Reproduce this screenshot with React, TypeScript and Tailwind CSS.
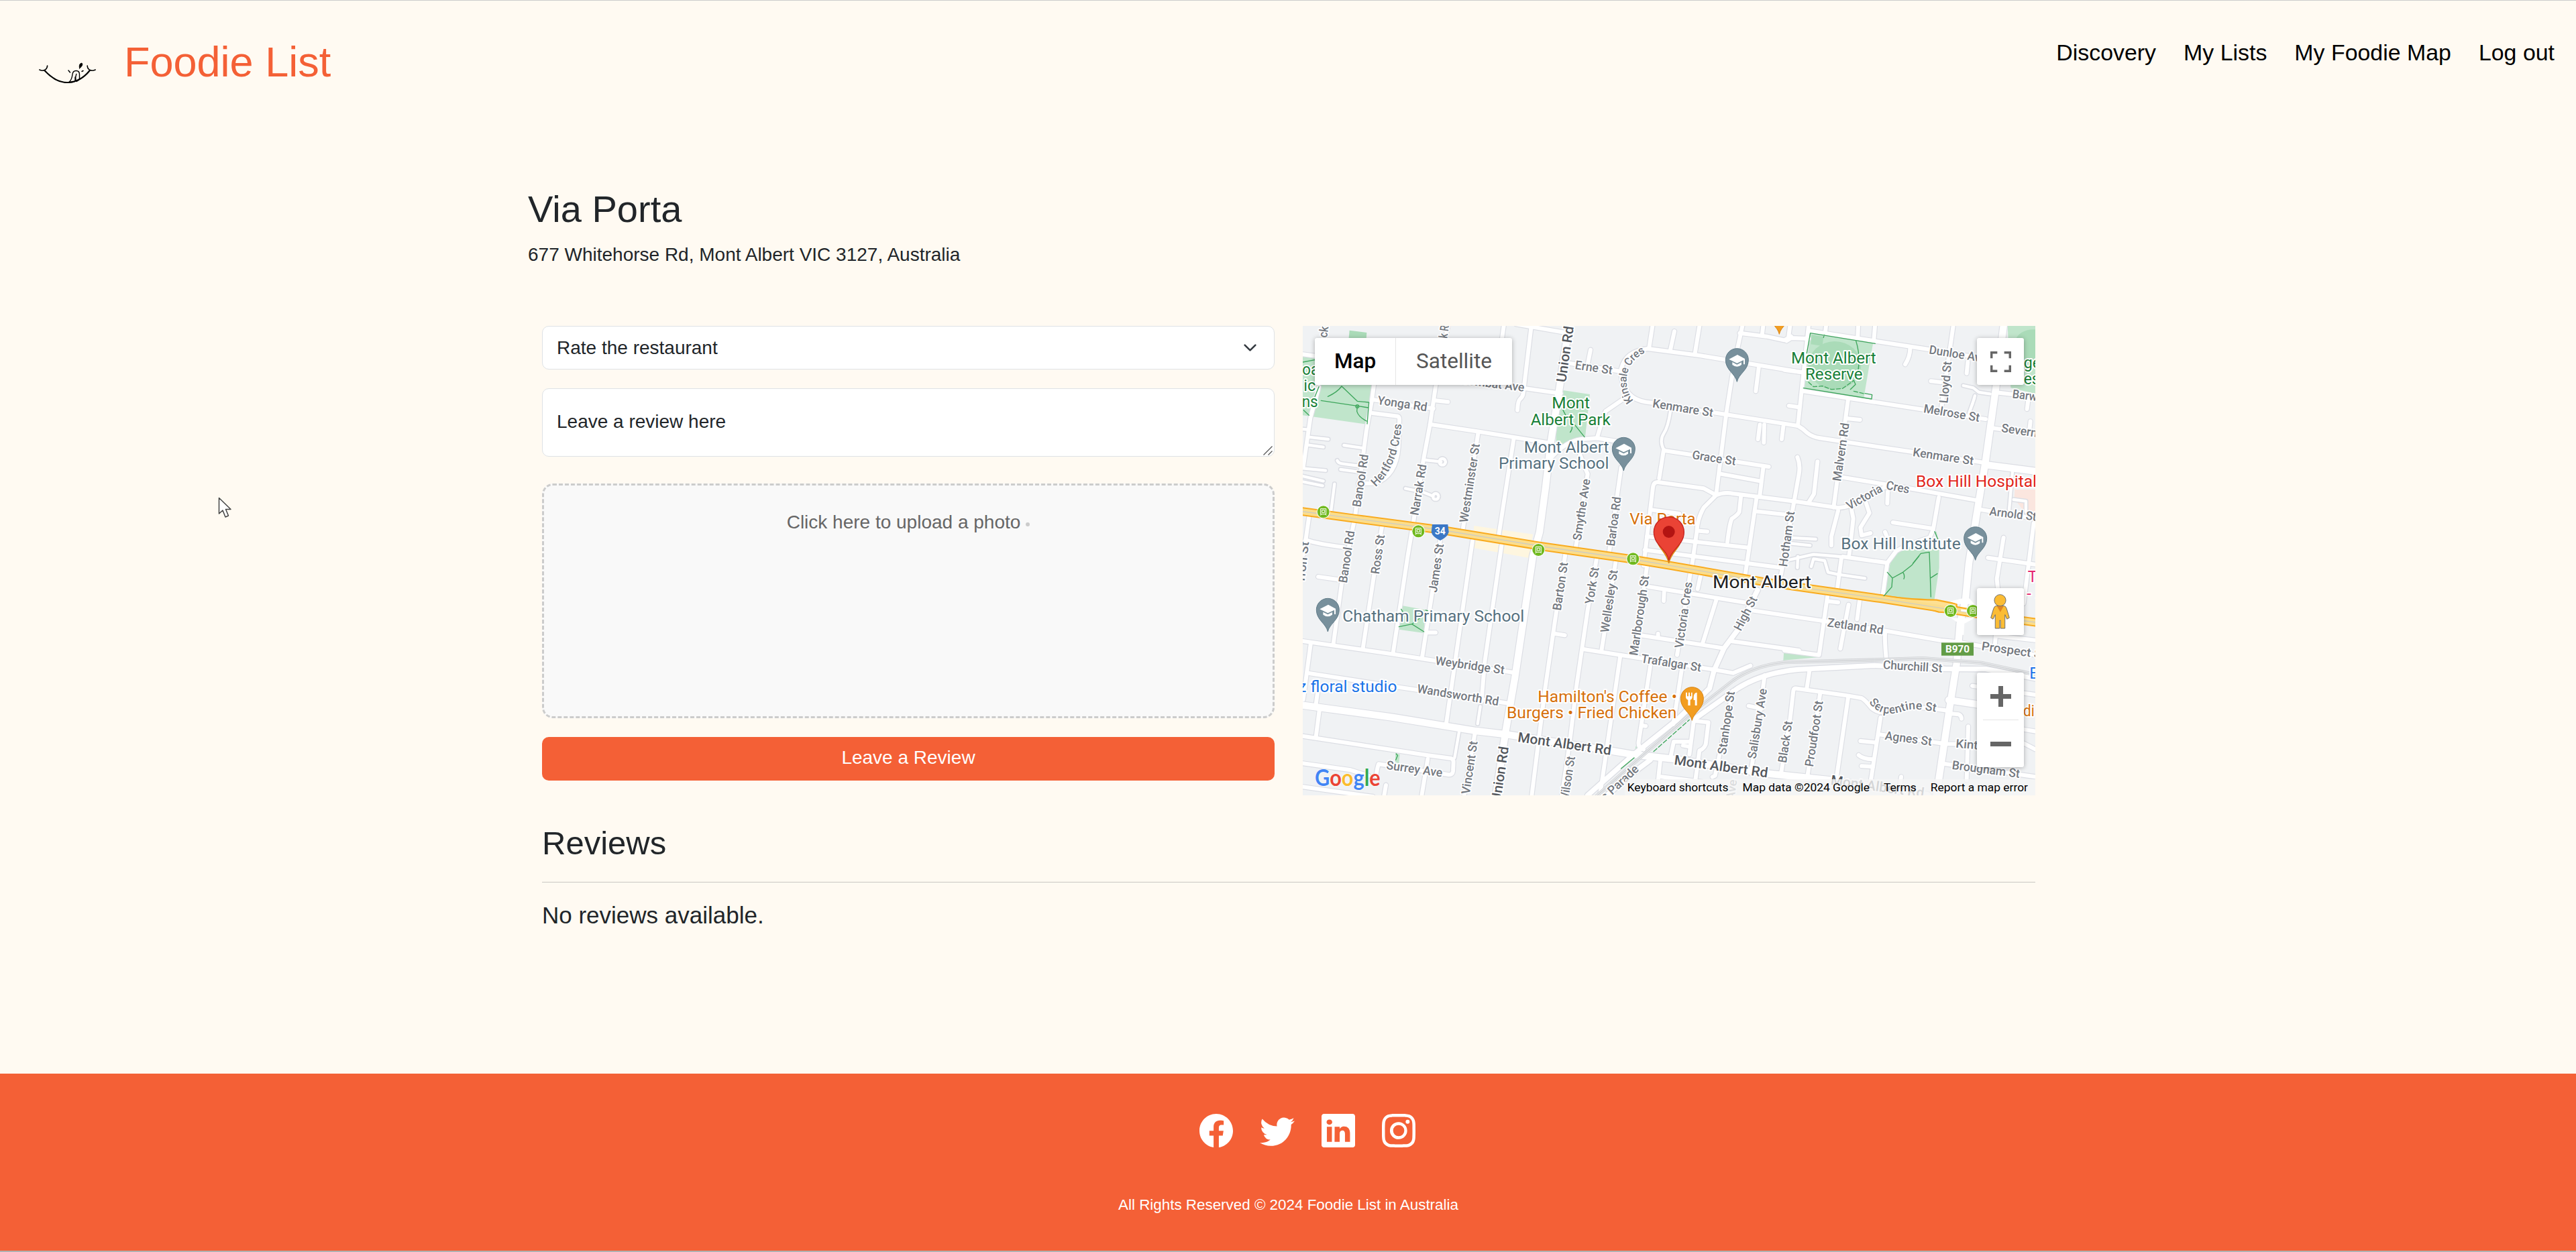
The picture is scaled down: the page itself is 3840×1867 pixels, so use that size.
import React from "react";
import { BsFacebook, BsTwitter, BsLinkedin, BsInstagram } from "react-icons/bs";

/* ---------- Map data (three map units per CSS pixel) ---------- */

const minorRoads = [
  "M6 145L62 152", "M330 240L315 350L290 490L240 870L180 1170L143 1440", "M320 348L590 388",
  "M318 408L430 422Q440 424 438 445L434 560Q425 690 330 722L255 722",
  "M655 18L600 290L575 460L545 620L500 900L475 1050L410 1480", "M600 352L655 358",
  "M575 458L800 492L945 515L1110 542", "M790 500L720 940", "M765 980L648 1795",
  "M950 520L880 970", "M895 1000L820 1520L805 1700",
  "M1028 20L992 320Q990 335 978 345Q968 352 966 395", "M905 18L868 280", "M960 10L1180 48",
  "M700 255L1160 320", "M78 290L40 430L8 650", "M35 865L10 1040", "M18 975Q80 995 190 1008",
  "M360 915L325 1130L275 1460", "M620 980L585 1210L540 1500", "M75 1140L165 1153",
  "M6 1428L400 1485L560 1510L945 1568", "M35 1572L440 1635L925 1706", "M42 1435L8 1690",
  "M72 1660L65 1710", "M80 1740L65 1855",
  "M6 1853L560 1938L670 1953Q680 1956 680 1970L678 2010Q676 2026 660 2026L345 1978Q340 1990 334 2030",
  "M6 1975L220 2005Q250 2015 300 2030", "M775 1845L728 2118", "M565 1955L538 2118",
  "M378 2072L370 2118", "M6 2080L320 2124", "M565 1390L600 1390",
  "M1180 1040L1135 1330L1090 1640L1030 2118", "M1135 1395L1178 1402",
  "M1320 1060L1280 1290L1230 1630L1200 1880L1165 2118", "M1405 1075L1342 1470",
  "M1265 1465L1520 1505L1840 1555L1930 1571L2008 1538", "M1545 1095L1490 1490",
  "M1560 1540L1508 1880Q1505 1905 1530 1912", "M1525 1806L1540 1808", "M1425 1500L1335 2118",
  "M1740 1120L1680 1490", "M1700 1560L1663 1800", "M1550 1184L1980 1255", "M2010 1290L2350 1340",
  "M1505 1400L1890 1460", "M1595 1395L1595 1412", "M1622 1210L1620 1248", "M1855 1245L1795 1435",
  "M1785 1135L1772 1195", "M1920 1428L2225 1470", "M1755 1780L1735 1935",
  "M1760 1785L1820 1792L1808 1890Q1800 1910 1780 1918L1762 2050", "M1650 1950L1665 1878L1735 1878",
  "M1706 1895L1735 1900", "M1605 1960L1588 2118", "M1610 2035L1790 2058", "M1930 1650L1850 2030L1838 2036",
  "M2072 1580L2010 2020", "M2000 1718L2060 1730",
  "M2145 2020L2185 1780L2200 1650Q2202 1638 2215 1640L2430 1670L2505 1683Q2520 1690 2550 1728Q2590 1760 2640 1738Q2700 1710 2880 1738",
  "M2272 1560L2260 1640", "M2320 1660L2262 2040", "M2445 1680L2390 2060", "M2590 1770L2545 2060",
  "M2500 1875L2570 1882", "M2492 1938Q2510 1955 2555 1957", "M2505 1987L2555 1990",
  "M2580 1845L2880 1888L3040 1890", "M2682 2035L2676 2080", "M2355 1210L2315 1490L2160 1470",
  "M2360 1250L2400 1255", "M2350 1340L2600 1380L2860 1425L2930 1432L3282 1490",
  "M2497 1240L2485 1330", "M2447 1265L2410 1462", "M2610 1395Q2608 1430 2616 1512",
  "M2900 1752L2940 1756Q2952 1762 2952 1775", "M3000 1628L3282 1668", "M3110 1405L3282 1424",
  "M3105 1400L3102 1440", "M3200 1818L3282 1832", "M2860 1975L3282 2035", "M2982 1810L2975 2050",
  "M3230 1885L3282 1912", "M3070 1055L3282 1085", "M3140 965L3110 1150L3115 1200", "M3275 900L3230 1260",
  "M2270 40L2560 85L2800 122L3100 172", "M2170 85L2190 72L2268 75", "M2185 18L2178 70",
  "M2346 18L2343 45", "M2490 18L2488 65", "M2565 18L2560 80", "M2268 18L2220 465",
  "M1960 50L2080 65L2160 82L2190 65", "M1972 18L1950 120L1925 250L1900 410L1855 770",
  "M2065 18L2060 60", "M1550 120L1780 150L2235 225", "M1570 18L1555 115", "M1668 42L1650 125",
  "M1780 18L1760 140", "M1293 125L1280 190", "M1200 185L1430 222",
  "M1550 120Q1450 130 1430 210Q1425 290 1480 335Q1510 358 1570 362L1840 405L2220 465Q2240 475 2260 495Q2285 515 2320 520L2720 580L3040 628",
  "M1450 338L1360 400Q1345 440 1322 520", "M1115 610Q1180 535 1250 525L1322 520L1415 535",
  "M1245 590Q1262 640 1280 680L1225 1020", "M1430 650L1375 1040", "M2045 205L2032 310",
  "M2180 375L2225 382", "M1620 572L1600 700", "M1620 575L2090 648", "M2065 655L2050 775",
  "M1875 680L2050 712", "M1530 1090L1572 740Q1575 715 1595 717L1800 745L1855 775Q1890 760 1930 768L2220 805L2400 832Q2450 830 2500 800Q2560 760 2610 740",
  "M1850 780L1800 830Q1770 880 1768 940L1742 1120", "M1560 840L1690 858", "M1780 935L1815 938",
  "M1545 960L2000 1010", "M1535 1020L2150 1100", "M1965 785L1958 850Q1950 865 1925 880Q1915 900 1905 985",
  "M2035 790L1985 1130", "M2040 848L2165 862", "M2218 605Q2232 640 2225 680L2195 850L2145 1130",
  "M2308 625L2292 770L2270 805", "M2050 460L2042 525", "M2070 460L2068 540", "M2155 468L2148 525",
  "M2445 345L2380 830", "M2440 432L2498 438", "M2400 845L2370 960L2370 1000", "M2460 840L2468 880L2450 1040",
  "M2525 810L2540 855L2500 920L2505 955L2545 945", "M2610 940L2622 970", "M2420 695L2720 745L3030 800",
  "M2622 760L2620 812", "M2850 785L2825 930L2810 965Q2700 1000 2660 1025L2620 1078L2420 1050",
  "M2645 897L2825 925", "M2415 1055L2395 1205", "M2620 1078L2598 1235", "M2245 310L3060 435",
  "M3090 475L3282 502", "M3100 315L3282 335", "M3040 840L3282 880", "M2915 18L2860 400",
  "M2722 120Q2722 155 2700 190", "M2815 265L2860 270", "M2980 180L2975 230",
  "M3250 350L3245 390", "M3260 445L3255 490", "M2160 215L2235 225",
];

const laneRoads = [
  "M30 515L120 525", "M25 550L98 560", "M6 655L108 665", "M6 690L98 712", "M6 715L95 733",
  "M190 552L280 565", "M160 620Q165 632 180 634L262 645", "M175 660L250 670", "M148 725L132 850",
  "M555 618L625 626M630 612a14 14 0 1 0 1 0", "M465 745L545 762L590 780M600 768a13 13 0 1 0 1 0",
  "M6 480L30 482", "M705 1835L685 1950", "M800 1720L788 1798", "M1650 400Q1640 470 1620 500Q1600 530 1620 572",
  "M2180 965L2300 972", "M2180 990L2275 1000", "M2180 1065L2290 1040L2410 1050", "M2220 1050L2218 1100",
  "M2280 1095L2290 1060L2340 1068L2355 1120L2400 1130L2520 1147", "M2960 285L3005 295L3030 315L3080 322",
  "M3012 330L3000 370M3010 340L2985 410", "M3180 670L3165 840", "M3185 795L3240 802L3240 850",
];

const majorRoads = [
  "M1196 18L1155 290L1115 540L1092 740L1065 940L1035 1050L955 1590L912 1840L870 2118",
  "M3140 18L3105 300L3060 620L3020 860L2985 1080L2970 1240L2945 1350L2930 1530L2895 1750L2840 2118",
  "M6 1715L400 1768L780 1830L920 1846L1380 1918L1480 1935L1660 1955L2080 2020L2380 2052L2800 2118",
  "M3065 640L3282 668", "M2895 1692L3030 1712",
];

const railsideRoads = [
  "M2040 1200L1950 1380L1890 1460L1845 1560L1825 1640L1680 1780L1480 1940L1280 2118",
  "M1360 2124Q1450 2040 1560 1960", "M1760 1775L1950 1640Q2060 1570 2220 1555L2560 1537L2880 1552L3060 1553L3282 1595",
];

const highway = "M-10 846L240 880L620 930L1080 1005L1480 1062L1650 1090L2080 1165L2250 1190L2590 1238L2780 1268L2910 1288L3090 1318L3290 1345";
const railway = "M1310 2130L1520 1945L1770 1730L1930 1605Q2020 1540 2160 1523L2560 1512L2780 1505L3040 1525L3290 1580";

type Label = [text: string, x1: number, y1: number, x2: number, y2: number];

const streetLabels: Label[] = [
  ["Yonga Rd", 338, 368, 560, 400], ["Banool Rd", 265, 830, 300, 595], ["Banool Rd", 203, 1170, 238, 937],
  ["Narrak Rd", 523, 868, 560, 640], ["Westminster St", 743, 900, 798, 548], ["Ross St", 347, 1130, 373, 955],
  ["James St", 605, 1212, 637, 995], ["rron St", 14, 1160, 34, 985], ["ck", 114, 72, 121, 22],
  ["k R", 652, 75, 660, 18], ["Wombat Ave", 700, 275, 995, 312], ["Erne St", 1222, 210, 1388, 235],
  ["Kenmare St", 1568, 382, 1838, 425], ["Kenmare St", 2732, 600, 3003, 640], ["Grace St", 1745, 612, 1940, 642],
  ["Smythe Ave", 1250, 980, 1292, 705], ["Barloa Rd", 1400, 1005, 1430, 785], ["Dunloe Ave", 2805, 142, 3060, 182],
  ["Lloyd St", 2890, 365, 2908, 178], ["Melrose St", 2780, 405, 3030, 447], ["Severn St", 3128, 492, 3350, 525],
  ["Barwon St", 3178, 340, 3400, 368], ["Malvern Rd", 2412, 715, 2450, 455], ["Victoria", 2450, 842, 2602, 757],
  ["Cres", 2612, 748, 2716, 768], ["Arnold St", 3075, 865, 3285, 890], ["Hotham St", 2172, 1097, 2206, 850],
  ["Weybridge St", 597, 1533, 905, 1576], ["Wandsworth Rd", 515, 1658, 880, 1717], ["Surrey Ave", 378, 2000, 628, 2036],
  ["Vincent St", 752, 2115, 788, 1878], ["Barton St", 1160, 1293, 1192, 1078], ["York St", 1305, 1265, 1331, 1100],
  ["Wellesley St", 1374, 1392, 1415, 1112], ["Marlborough St", 1503, 1495, 1555, 1138], ["Victoria Cres", 1706, 1462, 1748, 1166],
  ["High St", 1965, 1385, 2040, 1240], ["Trafalgar St", 1517, 1523, 1785, 1565], ["Stanhope St", 1898, 1937, 1938, 1655],
  ["Salisbury Ave", 2032, 1957, 2082, 1643], ["Black St", 2168, 1975, 2196, 1788], ["Proudfoot St", 2288, 1992, 2333, 1698],
  ["Wilson St", 1192, 2150, 1224, 1947], ["s Parade", 1360, 2145, 1512, 2005], ["Agnes St", 2608, 1868, 2817, 1896],
  ["Kintore St", 2925, 1904, 3170, 1925], ["Brougham St", 2908, 2000, 3210, 2040], ["Churchill St", 2600, 1552, 2865, 1568],
  ["Zetland Rd", 2350, 1362, 2600, 1398], ["Prospect St", 3040, 1468, 3325, 1508], ["Ave", 1936, 2140, 1948, 2050],
];

const arterialLabels: Label[] = [
  ["Union Rd", 1182, 272, 1218, 22], ["Union Rd", 890, 2150, 927, 1903], ["Mont Albert Rd", 965, 1878, 1383, 1938],
  ["Mont Albert Rd", 1665, 1980, 2083, 2038], ["Mont Albert Rd", 2365, 2070, 2782, 2128],
];

const placeLabels: { text: string; x1: number; x2: number; y: number; fill: string }[] = [
  { text: "Mont", x1: 1120, x2: 1290, y: 387, fill: "#188038" },
  { text: "Albert Park", x1: 1025, x2: 1382, y: 461, fill: "#188038" },
  { text: "Mont Albert", x1: 2190, x2: 2570, y: 185, fill: "#188038" },
  { text: "Reserve", x1: 2253, x2: 2510, y: 258, fill: "#188038" },
  { text: "Mont Albert", x1: 995, x2: 1375, y: 584, fill: "#56717f" },
  { text: "Primary School", x1: 882, x2: 1375, y: 658, fill: "#56717f" },
  { text: "Chatham Primary School", x1: 184, x2: 997, y: 1340, fill: "#56717f" },
  { text: "Box Hill Institute", x1: 2413, x2: 2948, y: 1018, fill: "#56717f" },
  { text: "Box Hill Hospital", x1: 2748, x2: 3288, y: 738, fill: "#e1251b" },
  { text: "Via Porta", x1: 1468, x2: 1763, y: 907, fill: "#d6700a" },
  { text: "Hamilton's Coffee •", x1: 1057, x2: 1680, y: 1700, fill: "#d6700a" },
  { text: "Burgers • Fried Chicken", x1: 918, x2: 1678, y: 1772, fill: "#d6700a" },
  { text: "z floral studio", x1: -14, x2: 427, y: 1657, fill: "#1a73e8" },
  { text: "oa", x1: 4, x2: 78, y: 238, fill: "#188038" },
  { text: "ic", x1: 10, x2: 64, y: 310, fill: "#188038" },
  { text: "ns", x1: 2, x2: 74, y: 382, fill: "#188038" },
  { text: "ge", x1: 3230, x2: 3306, y: 208, fill: "#188038" },
  { text: "es", x1: 3230, x2: 3302, y: 278, fill: "#188038" },
  { text: "T", x1: 3248, x2: 3290, y: 1165, fill: "#e5266f" },
  { text: "- .", x1: 3244, x2: 3300, y: 1238, fill: "#e5266f" },
  { text: "E", x1: 3256, x2: 3296, y: 1597, fill: "#1a73e8" },
  { text: "di", x1: 3228, x2: 3278, y: 1765, fill: "#d6700a" },
];

const tramStops = [[98, 850], [523, 937], [1060, 1020], [1483, 1060], [2903, 1293], [3003, 1293]];
const schools = [[1948, 170], [1441, 568], [3014, 968], [118, 1288]];

function StreetText({ label, size, fill, spread }: { label: Label; size: number; fill: string; spread: number }) {
  const [text, x1, y1, x2, y2] = label;
  const angle = (Math.atan2(y2 - y1, x2 - x1) * 180) / Math.PI;
  return (
    <text
      transform={`translate(${x1} ${y1}) rotate(${angle})`}
      fontSize={size}
      fontWeight={500}
      fill={fill}
      stroke="#ffffff"
      strokeWidth={spread}
      textLength={Math.hypot(x2 - x1, y2 - y1)}
      lengthAdjust="spacingAndGlyphs"
    >
      {text}
    </text>
  );
}

function Pin({ x, y, fill, edge }: { x: number; y: number; fill: string; edge: string }) {
  return (
    <path
      transform={`translate(${x} ${y})`}
      d="M0 98C-7 62 -51 46 -51 0A51 51 0 0 1 51 0C51 46 7 62 0 98Z"
      fill={fill}
      stroke={edge}
      strokeWidth={3}
    />
  );
}

function MapDrawing() {
  return (
    <svg viewBox="6 18 3276 2100" className="block h-[700px] w-[1092px]" fontFamily="Roboto, sans-serif">
      <rect x="6" y="18" width="3276" height="2100" fill="#f0f2f4" />
      <g fill="#c0e5cb">
        <path d="M6 155L330 200L292 458L6 418Z" />
        <path d="M1170 306L1290 324L1268 525L1140 560L1138 500Z" />
        <path d="M2276 50L2556 97L2515 340L2245 296Z" />
        <path d="M3158 18H3282V322L3172 295Z" />
        <path d="M453 1270L552 1288L548 1392L436 1376Z" />
        <path d="M2640 1050Q2660 1020 2700 1015L2855 1005L2840 938L2830 938L2852 975L2852 1100L2830 1248L2600 1228Z" />
        <path d="M2158 1472L2220 1472L2315 1500L2155 1514Z" />
        <path d="M420 1930L440 1934L436 1975L420 1970Z" />
        <path d="M1495 1898L1510 1900L1530 1918L1492 1918Z" />
      </g>
      <g fill="#aadbb8">
        <path d="M215 38L292 48L290 78L212 72Z" />
        <ellipse cx="2385" cy="195" rx="118" ry="108" />
        <path d="M2282 58L2335 66L2330 108L2278 100Z" />
        <path d="M3182 110Q3200 30 3282 34V190H3182Z" />
      </g>
      <path d="M772 912L1035 950L1018 1056L765 1010Z" fill="#fef6df" />
      <path d="M3190 750H3282V850L3240 860L3188 790Z" fill="#fbe6df" />

      <g fill="none" strokeLinecap="round" strokeLinejoin="round">
        <g stroke="#dcdee4">
          {laneRoads.map((d) => <path key={d} d={d} strokeWidth={22} />)}
          {minorRoads.map((d, i) => <path key={i} d={d} strokeWidth={25} />)}
          {railsideRoads.map((d) => <path key={d} d={d} strokeWidth={30} />)}
          {majorRoads.map((d) => <path key={d} d={d} strokeWidth={38} />)}
        </g>
        <g stroke="#ffffff">
          {laneRoads.map((d) => <path key={d} d={d} strokeWidth={13} />)}
          {minorRoads.map((d, i) => <path key={i} d={d} strokeWidth={18} />)}
          {railsideRoads.map((d) => <path key={d} d={d} strokeWidth={22} />)}
          {majorRoads.map((d) => <path key={d} d={d} strokeWidth={31} />)}
        </g>
        <path d={railway} stroke="#d0d2d5" strokeWidth={16} />
        <path d={railway} stroke="#e9ebed" strokeWidth={11} />
        <path d={railway} stroke="#d0d2d5" strokeWidth={4} />
        <g strokeLinecap="butt">
          <path d={highway} stroke="#f9ab1f" strokeWidth={39} />
          <path d="M2590 1222Q2680 1240 2840 1244L2930 1262L2930 1302L2850 1298Q2700 1250 2590 1250Z" fill="#fde093" stroke="#f9ab1f" strokeWidth={7} />
          <path d={highway} stroke="#fbdd8b" strokeWidth={27} />
          <path d={highway} stroke="#d0cdc0" strokeWidth={4} />
          <path d="M2970 1200L2960 1236L2900 1250L2935 1262H3010L2985 1235ZM2905 1325L2942 1350L2940 1400H2962L2965 1350L3010 1325Z" fill="#fff" />
          <path d="M2950 1290L3010 1298" stroke="#fff" strokeWidth={9} />
        </g>
        <g stroke="#3ea65c" strokeWidth={4}>
          <path d="M180 288L250 355L302 360L294 456M180 288Q160 315 118 334M88 352L250 376L300 384M250 376L248 400Q255 425 292 444M78 290L60 335M6 180L60 170M10 395L34 418" />
          <circle cx="250" cy="378" r="7" />
          <path d="M1170 395L1182 418M1222 460L1266 515M1210 470Q1212 480 1202 494" />
          <path d="M2276 50L2566 97M2276 50L2260 140M2480 85Q2500 150 2490 215M2245 296L2550 345L2552 326L2520 320M2338 58L2335 70M2470 262L2478 280L2455 302" />
          <path d="M2268 270L2290 290L2330 287L2370 302L2420 298L2470 262M2470 310L2520 322" strokeDasharray="18 9" />
          <path d="M446 1285L455 1300M436 1364L494 1352L548 1386M494 1352L530 1325M555 1290L565 1292" />
          <path d="M2832 938L2846 972M2808 1030L2810 1080L2815 1230M2735 1080L2770 1036L2808 1030M2620 1120L2643 1146L2690 1120L2730 1088L2762 1048M2643 1146L2640 1186L2605 1226M2690 1120Q2700 1135 2694 1150M2815 1145L2844 1126" />
          <path d="M1430 1998L1488 1950M424 1932L430 1940L422 1960" />
          <path d="M1575 1922L1735 1780" strokeDasharray="20 9" />
        </g>
      </g>

      <g paintOrder="stroke" strokeLinejoin="round">
        {streetLabels.map((l, i) => <StreetText key={i} label={l} size={54} fill="#73787f" spread={11} />)}
        {arterialLabels.map((l, i) => <StreetText key={i} label={l} size={61} fill="#53575d" spread={12} />)}
        <path id="hertford" d="M332 738Q436 650 449 440" fill="none" />
        <path id="kinsale" d="M1486 352C1440 305 1430 180 1548 132L1600 112" fill="none" />
        <path id="serpentine" d="M2538 1702C2590 1775 2660 1752 2710 1736C2750 1728 2800 1738 2900 1756" fill="none" />
        <g fontSize={53} fontWeight={500} fill="#73787f" stroke="#fff" strokeWidth={11}>
          <text textLength={312} lengthAdjust="spacingAndGlyphs"><textPath href="#hertford">Hertford Cres</textPath></text>
          <text fontSize={49} letterSpacing="-1.5"><textPath href="#kinsale">Kinsale Cres</textPath></text>
          <text><textPath href="#serpentine">Serpentine St</textPath></text>
        </g>
        {placeLabels.map((p, i) => (
          <text key={i} x={p.x1} y={p.y} fontSize={72} fill={p.fill} stroke="#fff" strokeWidth={12} textLength={p.x2 - p.x1} lengthAdjust="spacingAndGlyphs">
            {p.text}
          </text>
        ))}
        <text x="1839" y="1190" fontSize={80} fill="#202124" stroke="#fff" strokeWidth={12} textLength={441} lengthAdjust="spacingAndGlyphs">
          Mont Albert
        </text>
      </g>

      {tramStops.map(([x, y]) => (
        <g key={x} transform={`translate(${x} ${y})`}>
          <circle r="30" fill="#fff" />
          <circle r="27" fill="#70b91f" />
          <path d="M-12 -14H12V10H-12ZM-6 -8H6V3H-6ZM-14 15L-8 10M14 15L8 10" fill="none" stroke="#fff" strokeWidth={3} />
        </g>
      ))}

      <path d="M585 906H655L659 940Q655 962 621 978Q585 962 581 940Z" fill="#3b78c6" />
      <text x="620" y="951" fontSize="42" fontWeight="700" fill="#fff" textAnchor="middle">34</text>
      <rect x="2862" y="1435" width="144" height="58" fill="#629c46" />
      <text x="2934" y="1480" fontSize="46" fontWeight="700" fill="#fff" textAnchor="middle" textLength="108" lengthAdjust="spacingAndGlyphs">B970</text>

      {schools.map(([x, y]) => (
        <g key={x}>
          <Pin x={x} y={y} fill="#78909c" edge="#5f7b88" />
          <g transform={`translate(${x} ${y})`} fill="#fff">
            <path d="M-36 -3L2 -23L35 -5V20H29V1L0 15Z" />
            <path d="M-21 10L0 21L20 11V22Q0 38 -21 22Z" />
          </g>
        </g>
      ))}
      <Pin x={2137} y={-43} fill="#f29d20" edge="#d98412" />
      <Pin x={1747} y={1685} fill="#f29d20" edge="#d98412" />
      <g transform="translate(1747 1685)" fill="#fff">
        <path d="M-28 -27H-22V-10H-16V-27H-10V-10H-4V-27H1V-7Q1 3 -8 6V31H-18V6Q-28 3 -28 -7Z" />
        <path d="M7 -8Q8 -26 22 -27V31H13V7H7Z" />
      </g>
      <path d="M1643 1080C1634 1030 1590 1010 1590 970H1698C1698 1010 1652 1030 1643 1080Z" fill="#f29d20" stroke="#d98412" strokeWidth={4} />
      <path d="M1643 1067C1634 1015 1576 1000 1576 940A67 67 0 0 1 1711 940C1711 1000 1654 1015 1643 1067Z" fill="#ea4335" stroke="#c5221f" strokeWidth={4} />
      <circle cx="1643" cy="939" r="27" fill="#b31412" />

      <text y="2077" x="60" fontSize="101" fontWeight="700" fontFamily="Lato, sans-serif" paintOrder="stroke" stroke="#fff" strokeWidth={3} textLength="293" lengthAdjust="spacingAndGlyphs">
        <tspan fill="#4285f4">G</tspan><tspan fill="#ea4335">o</tspan><tspan fill="#fbbc2c">o</tspan><tspan fill="#4285f4">g</tspan><tspan fill="#34a853">l</tspan><tspan fill="#ea4335">e</tspan>
      </text>
    </svg>
  );
}

function MapPanel() {
  return (
    <div className="relative h-[700px] w-[1092px] overflow-hidden font-['Roboto',sans-serif]">
      <MapDrawing />
      <div className="absolute left-[18px] top-[18px] flex h-[70px] w-[294px] rounded-[3px] bg-white text-[31.5px] leading-[70px] shadow-[0_1px_7px_rgba(0,0,0,0.3)]">
        <div className="w-[121px] border-r border-[#e6e6e6] text-center font-medium text-black">Map</div>
        <div className="w-[173px] text-center text-[#565656]">Satellite</div>
      </div>
      <div className="absolute right-[17px] top-[18px] flex size-[70px] items-center justify-center rounded-[3px] bg-white shadow-[0_1px_7px_rgba(0,0,0,0.3)]">
        <svg viewBox="0 0 18 18" className="size-[31px]" fill="#666">
          <path d="M0 0v6h2V2h4V0H0zm16 0h-4v2h4v4h2V0h-2zm0 16h-4v2h6v-6h-2v4zM2 12H0v6h6v-2H2v-4z" />
        </svg>
      </div>
      <div className="absolute right-[17px] top-[391px] flex size-[70px] items-center justify-center rounded-[3px] bg-white pr-[2px] shadow-[0_1px_7px_rgba(0,0,0,0.3)]">
        <svg viewBox="0 0 88 156" className="h-[52px] w-[29px]" stroke="#6d6d6d" strokeWidth="3" strokeLinejoin="round">
          <path d="M26 52H62Q70 53 74 66L86 106L75 112L66 92V154H46V118H42V154H22V92L12 112L2 106L14 66Q18 53 26 52Z" fill="#fbbc34" />
          <path d="M30 54H60L45 80Z" fill="#e08522" stroke="none" />
          <circle cx="44" cy="27" r="26" fill="#fbbc34" />
        </svg>
      </div>
      <div className="absolute right-[17px] top-[517px] flex h-[141px] w-[70px] flex-col items-center rounded-[3px] bg-white shadow-[0_1px_7px_rgba(0,0,0,0.3)]">
        <div className="flex h-[70px] items-center">
          <svg viewBox="0 0 31 31" className="size-[31px]" fill="#666"><path d="M12 0h7v12h12v7H19v12h-7V19H0v-7h12z" /></svg>
        </div>
        <div className="h-px w-[53px] bg-[#e6e6e6]" />
        <div className="flex h-[70px] items-center"><div className="h-[7px] w-[31px] bg-[#666]" /></div>
      </div>
      <div className="absolute bottom-0 right-0 flex h-[24px] items-center gap-[21px] whitespace-nowrap bg-[#f5f5f5]/80 pl-[4px] pr-[11px] text-[17.4px] leading-[24px] text-black">
        <span>Keyboard shortcuts</span>
        <span>Map data ©2024 Google</span>
        <span>Terms</span>
        <span>Report a map error</span>
      </div>
    </div>
  );
}

function SmileLogo() {
  return (
    <svg viewBox="0 0 85 31" className="mt-[92px] h-[31px] w-[85px]" fill="none" stroke="#000" strokeLinecap="round">
      <path d="M0.8 11Q6 13.6 9.5 11Q12.6 8.5 12.6 5" strokeWidth="1.6" />
      <path d="M84.2 11Q79 13.6 75 11Q72 8.5 72.2 5" strokeWidth="1.6" />
      <path d="M8.8 12.5Q26 31 43.5 30Q62 29 75.5 12.5" strokeWidth="2.2" />
      <path d="M45 29.5Q49 26 50 18Q50.5 12.5 55.5 12.5Q60.5 12.5 60.5 18V24Q60 27 56 28.500M55.800 17.500Q54 22 55 27M45 29.5Q52 30 54 28V22" strokeWidth="1.4" />
      <path d="M44 12L46.5 15M66 12.5L64 13.5" strokeWidth="1.5" />
      <path d="M60.5 9Q59 1.5 64 1Q67 4 60.5 9Z" fill="#000" strokeWidth="0.8" />
    </svg>
  );
}

export default function App() {
  return (
    <div className="relative flex h-[1867px] w-[3840px] flex-col overflow-hidden bg-[#fffaf2] font-['Liberation_Sans',Arial,sans-serif] text-[28px] leading-[42px] text-[#212529]">
      <header className="flex h-[278px] items-start justify-between border-t border-[#cccccc] pl-[58px] pr-[32px]">
        <div className="flex items-start">
          <SmileLogo />
          <span className="ml-[42px] mt-[44px] text-[63px] leading-[94px] text-[#f46036]">Foodie List</span>
        </div>
        <nav className="mt-[51px] flex gap-[41px] text-[33.9px] leading-[52px] text-black">
          <a>Discovery</a>
          <a>My Lists</a>
          <a>My Foodie Map</a>
          <a>Log out</a>
        </nav>
      </header>

      <main className="flex h-[1323px] flex-col pl-[787px]">
        <h1 className="text-[56px] leading-[68px]">Via Porta</h1>
        <p className="mt-[13px]">677 Whitehorse Rd, Mont Albert VIC 3127, Australia</p>

        <div className="ml-[21px] mt-[85px] flex gap-[42px]">
          <div className="flex w-[1092px] flex-col">
            <div className="flex h-[65px] items-center justify-between rounded-[10px] border border-[#dee2e6] bg-white pl-[21px] pr-[25px]">
              <span>Rate the restaurant</span>
              <svg viewBox="0 0 16 16" className="size-[21px]" fill="none" stroke="#343a40" strokeWidth="2" strokeLinecap="round" strokeLinejoin="round">
                <path d="m2 5 6 6 6-6" />
              </svg>
            </div>
            <div className="relative mt-[28px] flex h-[102px] items-center rounded-[10px] border border-[#dee2e6] bg-white pb-[3px] pl-[21px]">
              <span>Leave a review here</span>
              <svg viewBox="0 0 14 14" className="absolute bottom-[1px] right-[2px] size-[14px]" stroke="#555" strokeWidth="1.3">
                <path d="M0.5 13.5L13.5 0.5M7.5 13.5L13.5 7.5" />
              </svg>
            </div>
            <div className="mt-[40px] flex h-[350px] items-start justify-center rounded-[16px] border-[3px] border-dashed border-[#cccccc] bg-[#f9f9f9] pt-[34px] text-[#666666]">
              <span>Click here to upload a photo</span>
              <span className="ml-[8px] mt-[21px] size-[6px] rounded-full bg-[#cccccc]" />
            </div>
            <div className="mt-[28px] flex h-[65px] items-center justify-center rounded-[10px] bg-[#f46036] pb-[3px] text-white">Leave a Review</div>
          </div>
          <MapPanel />
        </div>

        <section className="ml-[21px] mt-[42px] w-[2226px]">
          <h2 className="text-[49px] leading-[58px]">Reviews</h2>
          <div className="mt-[29px] h-px bg-[#c9c6c2]" />
          <p className="mt-[23px] text-[35px] leading-[52px]">No reviews available.</p>
        </section>
      </main>

      <footer className="flex h-[264px] flex-col items-center bg-[#f46036] pt-[60px] text-white">
        <div className="ml-[58px] flex h-[50px] items-center gap-[40px]">
          <BsFacebook className="size-[50px]" />
          <BsTwitter className="size-[52px]" />
          <BsLinkedin className="size-[50px]" />
          <BsInstagram className="size-[50px]" />
        </div>
        <p className="ml-[1px] mt-[69px] text-[22.4px] leading-[34px]">All Rights Reserved © 2024 Foodie List in Australia</p>
      </footer>
      <div className="h-[2px] bg-[#b0b0b0]" />

      <svg viewBox="0 0 22 32" className="absolute left-[325px] top-[741px] h-[32px] w-[22px]" fill="#fff" stroke="#444" strokeWidth="1.5" strokeLinejoin="round">
        <path d="M1.5 1.5V25L7 20L11 30L15.5 28L11.5 18.5H19Z" />
      </svg>
    </div>
  );
}
